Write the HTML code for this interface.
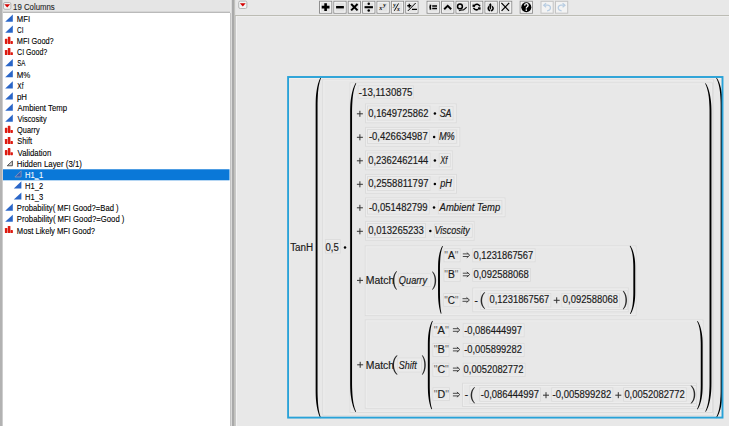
<!DOCTYPE html>
<html><head><meta charset="utf-8"><style>
html,body{margin:0;padding:0;}
body{width:729px;height:426px;position:relative;overflow:hidden;background:#e8e8e8;font-family:"Liberation Sans",sans-serif;}
.a{position:absolute;}
svg{position:absolute;left:0;top:0;font-family:"Liberation Sans",sans-serif;}
</style></head><body>
<div class="a" style="left:0;top:0;width:230px;height:12px;background:#e5e5e5"></div>
<div class="a" style="left:0;top:11px;width:230px;height:1px;background:#d6d6d6"></div>
<div class="a" style="left:0;top:12px;width:230px;height:1px;background:#bababa"></div>
<div class="a" style="left:3px;top:13px;width:227px;height:413px;background:#ffffff"></div>
<div class="a" style="left:0;top:0;width:2px;height:426px;background:#b2b2b2"></div>
<div class="a" style="left:2px;top:0;width:1px;height:426px;background:#cecece"></div>
<div class="a" style="left:230px;top:13px;width:1px;height:413px;background:#c4c4c4"></div>
<div class="a" style="left:231px;top:0;width:1px;height:426px;background:#dadada"></div>
<div class="a" style="left:232px;top:0;width:2px;height:426px;background:#a9a9a9"></div>
<div class="a" style="left:234px;top:0;width:1px;height:426px;background:#c2c2be"></div>
<div class="a" style="left:235px;top:0;width:1px;height:426px;background:#e2e2e2"></div>
<div class="a" style="left:236px;top:0;width:493px;height:15px;background:#e8e8e8"></div>
<div class="a" style="left:235px;top:15px;width:494px;height:1px;background:#bcbcb4"></div>
<div class="a" style="left:236px;top:16px;width:493px;height:1px;background:#eeeeee"></div>
<div class="a" style="left:235px;top:16px;width:1px;height:410px;background:#c8c8c8"></div>
<div class="a" style="left:236px;top:16px;width:1px;height:410px;background:#f2f2f2"></div>
<svg width="729" height="426" viewBox="0 0 729 426">
<rect x="3" y="169.28" width="226.5" height="11.02" fill="#0a78d8"/>
<path d="M5.2 21.7 L12.8 21.7 L12.8 14.5 Z" fill="#2a66c8" stroke="none" stroke-width="0"/>
<path d="M5.2 32.82 L12.8 32.82 L12.8 25.62 Z" fill="#2a66c8" stroke="none" stroke-width="0"/>
<rect x="4.9" y="38.84" width="2.5" height="5.1" rx="0.6" fill="#dd1a10"/>
<rect x="7.8" y="36.84" width="2.6" height="7.1" rx="0.6" fill="#dd1a10"/>
<rect x="10.5" y="41.04" width="2.4" height="2.9" rx="0.6" fill="#dd1a10"/>
<rect x="4.9" y="49.96" width="2.5" height="5.1" rx="0.6" fill="#dd1a10"/>
<rect x="7.8" y="47.96" width="2.6" height="7.1" rx="0.6" fill="#dd1a10"/>
<rect x="10.5" y="52.16" width="2.4" height="2.9" rx="0.6" fill="#dd1a10"/>
<path d="M5.2 66.17999999999999 L12.8 66.17999999999999 L12.8 58.97999999999999 Z" fill="#2a66c8" stroke="none" stroke-width="0"/>
<path d="M5.2 77.3 L12.8 77.3 L12.8 70.1 Z" fill="#2a66c8" stroke="none" stroke-width="0"/>
<path d="M5.2 88.42 L12.8 88.42 L12.8 81.22 Z" fill="#2a66c8" stroke="none" stroke-width="0"/>
<path d="M5.2 99.53999999999999 L12.8 99.53999999999999 L12.8 92.33999999999999 Z" fill="#2a66c8" stroke="none" stroke-width="0"/>
<path d="M5.2 110.66 L12.8 110.66 L12.8 103.46 Z" fill="#2a66c8" stroke="none" stroke-width="0"/>
<path d="M5.2 121.78 L12.8 121.78 L12.8 114.58 Z" fill="#2a66c8" stroke="none" stroke-width="0"/>
<rect x="4.9" y="127.80" width="2.5" height="5.1" rx="0.6" fill="#dd1a10"/>
<rect x="7.8" y="125.80" width="2.6" height="7.1" rx="0.6" fill="#dd1a10"/>
<rect x="10.5" y="130.00" width="2.4" height="2.9" rx="0.6" fill="#dd1a10"/>
<rect x="4.9" y="138.92" width="2.5" height="5.1" rx="0.6" fill="#dd1a10"/>
<rect x="7.8" y="136.92" width="2.6" height="7.1" rx="0.6" fill="#dd1a10"/>
<rect x="10.5" y="141.12" width="2.4" height="2.9" rx="0.6" fill="#dd1a10"/>
<rect x="4.9" y="150.04" width="2.5" height="5.1" rx="0.6" fill="#dd1a10"/>
<rect x="7.8" y="148.04" width="2.6" height="7.1" rx="0.6" fill="#dd1a10"/>
<rect x="10.5" y="152.24" width="2.4" height="2.9" rx="0.6" fill="#dd1a10"/>
<path d="M7.2 165.76 L12.4 165.76 L12.4 160.96 Z" fill="#d4d4d4" stroke="#555555" stroke-width="1.0"/>
<path d="M14.9 176.98 L21.1 176.98 L21.1 170.78 Z" fill="#2f5fb8" stroke="#8a96b8" stroke-width="0.9"/>
<path d="M13.8 188.49999999999997 L21.4 188.49999999999997 L21.4 181.29999999999998 Z" fill="#2a66c8" stroke="none" stroke-width="0"/>
<path d="M13.8 199.61999999999998 L21.4 199.61999999999998 L21.4 192.42 Z" fill="#2a66c8" stroke="none" stroke-width="0"/>
<path d="M5.2 210.73999999999998 L12.8 210.73999999999998 L12.8 203.54 Z" fill="#2a66c8" stroke="none" stroke-width="0"/>
<path d="M5.2 221.85999999999999 L12.8 221.85999999999999 L12.8 214.66 Z" fill="#2a66c8" stroke="none" stroke-width="0"/>
<rect x="4.9" y="227.88" width="2.5" height="5.1" rx="0.6" fill="#dd1a10"/>
<rect x="7.8" y="225.88" width="2.6" height="7.1" rx="0.6" fill="#dd1a10"/>
<rect x="10.5" y="230.08" width="2.4" height="2.9" rx="0.6" fill="#dd1a10"/>
<rect x="34.6" y="178.3" width="4.0" height="0.9" fill="#ffffff"/>
<rect x="3.5" y="2.5" width="7.4" height="6.800000000000001" rx="1.5" fill="#f2f4f4" stroke="#b4b4b4" stroke-width="1"/>
<path d="M4.30 4.30 L10.10 4.30 L7.20 7.50 Z" fill="#d40000"/>
<rect x="238.7" y="1.1" width="8.200000000000017" height="7.4" rx="1.5" fill="#f2f4f4" stroke="#b4b4b4" stroke-width="1"/>
<path d="M239.90 3.20 L245.70 3.20 L242.80 6.40 Z" fill="#d40000"/>
<rect x="319.5" y="1.3" width="12.2" height="11.9" fill="#e2e2e2" stroke="#8e8e8e" stroke-width="1"/>
<rect x="320.5" y="2.3" width="10.2" height="9.9" fill="none" stroke="#f6f6f6" stroke-width="1"/>
<rect x="333.88" y="1.3" width="12.2" height="11.9" fill="#e2e2e2" stroke="#8e8e8e" stroke-width="1"/>
<rect x="334.88" y="2.3" width="10.2" height="9.9" fill="none" stroke="#f6f6f6" stroke-width="1"/>
<rect x="348.26" y="1.3" width="12.2" height="11.9" fill="#e2e2e2" stroke="#8e8e8e" stroke-width="1"/>
<rect x="349.26" y="2.3" width="10.2" height="9.9" fill="none" stroke="#f6f6f6" stroke-width="1"/>
<rect x="362.64" y="1.3" width="12.2" height="11.9" fill="#e2e2e2" stroke="#8e8e8e" stroke-width="1"/>
<rect x="363.64" y="2.3" width="10.2" height="9.9" fill="none" stroke="#f6f6f6" stroke-width="1"/>
<rect x="377.02" y="1.3" width="12.2" height="11.9" fill="#e2e2e2" stroke="#8e8e8e" stroke-width="1"/>
<rect x="378.02" y="2.3" width="10.2" height="9.9" fill="none" stroke="#f6f6f6" stroke-width="1"/>
<rect x="391.4" y="1.3" width="12.2" height="11.9" fill="#e2e2e2" stroke="#8e8e8e" stroke-width="1"/>
<rect x="392.4" y="2.3" width="10.2" height="9.9" fill="none" stroke="#f6f6f6" stroke-width="1"/>
<rect x="405.78" y="1.3" width="12.2" height="11.9" fill="#e2e2e2" stroke="#8e8e8e" stroke-width="1"/>
<rect x="406.78" y="2.3" width="10.2" height="9.9" fill="none" stroke="#f6f6f6" stroke-width="1"/>
<rect x="427.1" y="1.3" width="12.2" height="11.9" fill="#e2e2e2" stroke="#8e8e8e" stroke-width="1"/>
<rect x="428.1" y="2.3" width="10.2" height="9.9" fill="none" stroke="#f6f6f6" stroke-width="1"/>
<rect x="441.58000000000004" y="1.3" width="12.2" height="11.9" fill="#e2e2e2" stroke="#8e8e8e" stroke-width="1"/>
<rect x="442.58000000000004" y="2.3" width="10.2" height="9.9" fill="none" stroke="#f6f6f6" stroke-width="1"/>
<rect x="456.06" y="1.3" width="12.2" height="11.9" fill="#e2e2e2" stroke="#8e8e8e" stroke-width="1"/>
<rect x="457.06" y="2.3" width="10.2" height="9.9" fill="none" stroke="#f6f6f6" stroke-width="1"/>
<rect x="470.54" y="1.3" width="12.2" height="11.9" fill="#e2e2e2" stroke="#8e8e8e" stroke-width="1"/>
<rect x="471.54" y="2.3" width="10.2" height="9.9" fill="none" stroke="#f6f6f6" stroke-width="1"/>
<rect x="485.02000000000004" y="1.3" width="12.2" height="11.9" fill="#e2e2e2" stroke="#8e8e8e" stroke-width="1"/>
<rect x="486.02000000000004" y="2.3" width="10.2" height="9.9" fill="none" stroke="#f6f6f6" stroke-width="1"/>
<rect x="499.5" y="1.3" width="12.2" height="11.9" fill="#e2e2e2" stroke="#8e8e8e" stroke-width="1"/>
<rect x="500.5" y="2.3" width="10.2" height="9.9" fill="none" stroke="#f6f6f6" stroke-width="1"/>
<rect x="520.2" y="1.3" width="12.2" height="11.9" fill="#e2e2e2" stroke="#8e8e8e" stroke-width="1"/>
<rect x="521.2" y="2.3" width="10.2" height="9.9" fill="none" stroke="#f6f6f6" stroke-width="1"/>
<rect x="541.0" y="1.3" width="12.2" height="11.9" fill="#f3f3f3" stroke="#c4c4c4" stroke-width="1"/>
<rect x="555.5" y="1.3" width="12.2" height="11.9" fill="#f3f3f3" stroke="#c4c4c4" stroke-width="1"/>
<path d="M321.70000000000005 7.1 H329.5 M325.6 3.3 V10.9" stroke="#000" stroke-width="2.6"/>
<path d="M336.08000000000004 7.2 H343.88" stroke="#000" stroke-width="2.4"/>
<path d="M351.16 4 L357.56 10.4 M357.56 4 L351.16 10.4" stroke="#000" stroke-width="2"/>
<path d="M364.54 7.2 H372.94" stroke="#000" stroke-width="2.1"/><circle cx="368.74" cy="3.8" r="1.25"/><circle cx="368.74" cy="10.6" r="1.25"/>
<text x="379.32" y="9.6" font-family="Liberation Serif" font-size="6" font-weight="bold" font-style="italic">x</text><text x="383.32" y="6.6" font-family="Liberation Serif" font-size="6" font-weight="bold" font-style="italic">y</text>
<text x="393.3" y="7" font-family="Liberation Serif" font-size="5.5" font-weight="bold" font-style="italic">y</text><path d="M394.3 10.8 L398.5 3.5" stroke="#000" stroke-width="0.9"/><text x="397.1" y="11.3" font-family="Liberation Serif" font-size="5.5" font-weight="bold" font-style="italic">x</text>
<path d="M407.28 5.75 H411.28 M409.28 3.8 V7.7 M411.98 9.3 H416.98" stroke="#000" stroke-width="1.3"/><path d="M407.88 10.9 L415.68 3.0" stroke="#000" stroke-width="1.0"/>
<path d="M430.6 4.8 Q429.6 7.2 430.6 9.6" stroke="#000" stroke-width="1.6" fill="none"/><path d="M432.20000000000005 5.9 H437.00000000000006 M432.20000000000005 8.6 H437.00000000000006" stroke="#000" stroke-width="1.5"/>
<path d="M444.18000000000006 9.3 L447.68000000000006 5.9 L451.18000000000006 9.3" stroke="#000" stroke-width="1.9" fill="none"/>
<circle cx="459.96000000000004" cy="6.4" r="2.4" stroke="#000" stroke-width="1.5" fill="none"/><path d="M459.16 10.9 C460.76000000000005 9.4 462.76000000000005 10.6 463.96000000000004 9.6 S465.76000000000005 8.2 466.56 7.0" stroke="#000" stroke-width="1.1" fill="none"/>
<path d="M474.84000000000003 5.2 Q477.24000000000007 3.0 480.04 6.2 M478.04 9.4 Q475.44000000000005 10.9 473.44000000000005 7.8" stroke="#000" stroke-width="1.5" fill="none"/><rect x="472.54" y="4.6" width="2.5" height="2.3"/><rect x="478.04" y="7.3" width="2.5" height="2.3"/>
<path d="M489.32000000000005 6.3 Q486.7200000000001 8.8 490.02000000000004 11.0 M491.9200000000001 6.3 Q494.7200000000001 8.8 491.2200000000001 11.0" stroke="#000" stroke-width="1.5" fill="none"/><path d="M488.7200000000001 5.6 L490.32000000000005 3.0 L491.9200000000001 5.6 Z"/><path d="M490.32000000000005 5 V9.2" stroke="#000" stroke-width="1.3"/>
<path d="M501.40000000000003 2.8 L509.0 10.9 M509.20000000000005 2.8 L501.6 10.9" stroke="#000" stroke-width="1.2"/>
<circle cx="526.3000000000001" cy="7.2" r="5.0" fill="#000"/><path d="M524.6 5.6 Q524.7 3.6 526.3000000000001 3.6 Q528.1 3.6 528.1 5.3 Q528.1 6.4 527.0000000000001 7.0 Q526.3000000000001 7.4 526.3000000000001 8.4" stroke="#fff" stroke-width="1.4" fill="none"/><circle cx="526.3000000000001" cy="10.1" r="0.85" fill="#fff"/>
<path d="M544.1 5.2 H547.9 Q550.7 5.6 550.5 8.2 Q550.1 10.6 547.1 10.8" stroke="#b8cde2" stroke-width="1.2" fill="none"/><path d="M546.1 3.2 L543.7 5.2 L546.1 7.2" stroke="#b8cde2" stroke-width="1.2" fill="none"/>
<path d="M564.6 5.2 H560.8000000000001 Q558.0 5.6 558.2 8.2 Q558.6 10.6 561.6 10.8" stroke="#b8cde2" stroke-width="1.2" fill="none"/><path d="M562.6 3.2 L565.0 5.2 L562.6 7.2" stroke="#b8cde2" stroke-width="1.2" fill="none"/>
<rect x="289.6" y="78.5" width="431.4" height="337.6" fill="none" stroke="#f3efec" stroke-width="1"/>
<rect x="322.80" y="79.20" width="390.50" height="336.00" fill="#e8e8e8" stroke="#dcdcdc" stroke-width="1"/>
<rect x="323.80" y="80.20" width="388.50" height="334.00" fill="none" stroke="#ededed" stroke-width="1"/>
<rect x="325.40" y="239.60" width="14.80" height="13.40" fill="#e8e8e8" stroke="#dcdcdc" stroke-width="1"/>
<rect x="326.40" y="240.60" width="12.80" height="11.40" fill="none" stroke="#ededed" stroke-width="1"/>
<rect x="350.10" y="82.90" width="362.30" height="329.50" fill="#e8e8e8" stroke="#dcdcdc" stroke-width="1"/>
<rect x="351.10" y="83.90" width="360.30" height="327.50" fill="none" stroke="#ededed" stroke-width="1"/>
<rect x="358.20" y="85.90" width="55.10" height="12.10" fill="#e8e8e8" stroke="#dcdcdc" stroke-width="1"/>
<rect x="359.20" y="86.90" width="53.10" height="10.10" fill="none" stroke="#ededed" stroke-width="1"/>
<rect x="365.50" y="103.90" width="90.70" height="18.80" fill="#e8e8e8" stroke="#dcdcdc" stroke-width="1"/>
<rect x="366.50" y="104.90" width="88.70" height="16.80" fill="none" stroke="#ededed" stroke-width="1"/>
<rect x="367.50" y="106.10" width="62.50" height="13.80" fill="#e8e8e8" stroke="#dcdcdc" stroke-width="1"/>
<rect x="368.50" y="107.10" width="60.50" height="11.80" fill="none" stroke="#ededed" stroke-width="1"/>
<rect x="439.30" y="106.60" width="13.60" height="13.10" fill="#e8e8e8" stroke="#dcdcdc" stroke-width="1"/>
<rect x="440.30" y="107.60" width="11.60" height="11.10" fill="none" stroke="#ededed" stroke-width="1"/>
<rect x="365.50" y="127.40" width="94.20" height="18.80" fill="#e8e8e8" stroke="#dcdcdc" stroke-width="1"/>
<rect x="366.50" y="128.40" width="92.20" height="16.80" fill="none" stroke="#ededed" stroke-width="1"/>
<rect x="367.50" y="129.60" width="61.70" height="13.80" fill="#e8e8e8" stroke="#dcdcdc" stroke-width="1"/>
<rect x="368.50" y="130.60" width="59.70" height="11.80" fill="none" stroke="#ededed" stroke-width="1"/>
<rect x="438.50" y="130.10" width="17.80" height="13.10" fill="#e8e8e8" stroke="#dcdcdc" stroke-width="1"/>
<rect x="439.50" y="131.10" width="15.80" height="11.10" fill="none" stroke="#ededed" stroke-width="1"/>
<rect x="365.50" y="150.90" width="86.80" height="18.80" fill="#e8e8e8" stroke="#dcdcdc" stroke-width="1"/>
<rect x="366.50" y="151.90" width="84.80" height="16.80" fill="none" stroke="#ededed" stroke-width="1"/>
<rect x="367.50" y="153.10" width="62.50" height="13.80" fill="#e8e8e8" stroke="#dcdcdc" stroke-width="1"/>
<rect x="368.50" y="154.10" width="60.50" height="11.80" fill="none" stroke="#ededed" stroke-width="1"/>
<rect x="439.30" y="153.60" width="10.90" height="13.10" fill="#e8e8e8" stroke="#dcdcdc" stroke-width="1"/>
<rect x="440.30" y="154.60" width="8.90" height="11.10" fill="none" stroke="#ededed" stroke-width="1"/>
<rect x="365.50" y="174.40" width="91.00" height="18.80" fill="#e8e8e8" stroke="#dcdcdc" stroke-width="1"/>
<rect x="366.50" y="175.40" width="89.00" height="16.80" fill="none" stroke="#ededed" stroke-width="1"/>
<rect x="367.50" y="176.60" width="62.50" height="13.80" fill="#e8e8e8" stroke="#dcdcdc" stroke-width="1"/>
<rect x="368.50" y="177.60" width="60.50" height="11.80" fill="none" stroke="#ededed" stroke-width="1"/>
<rect x="439.30" y="177.10" width="14.50" height="13.10" fill="#e8e8e8" stroke="#dcdcdc" stroke-width="1"/>
<rect x="440.30" y="178.10" width="12.50" height="11.10" fill="none" stroke="#ededed" stroke-width="1"/>
<rect x="365.50" y="197.90" width="139.50" height="18.80" fill="#e8e8e8" stroke="#dcdcdc" stroke-width="1"/>
<rect x="366.50" y="198.90" width="137.50" height="16.80" fill="none" stroke="#ededed" stroke-width="1"/>
<rect x="367.50" y="200.10" width="61.60" height="13.80" fill="#e8e8e8" stroke="#dcdcdc" stroke-width="1"/>
<rect x="368.50" y="201.10" width="59.60" height="11.80" fill="none" stroke="#ededed" stroke-width="1"/>
<rect x="438.40" y="200.60" width="63.40" height="13.10" fill="#e8e8e8" stroke="#dcdcdc" stroke-width="1"/>
<rect x="439.40" y="201.60" width="61.40" height="11.10" fill="none" stroke="#ededed" stroke-width="1"/>
<rect x="365.50" y="221.40" width="108.60" height="18.80" fill="#e8e8e8" stroke="#dcdcdc" stroke-width="1"/>
<rect x="366.50" y="222.40" width="106.60" height="16.80" fill="none" stroke="#ededed" stroke-width="1"/>
<rect x="367.50" y="223.60" width="57.90" height="13.80" fill="#e8e8e8" stroke="#dcdcdc" stroke-width="1"/>
<rect x="368.50" y="224.60" width="55.90" height="11.80" fill="none" stroke="#ededed" stroke-width="1"/>
<rect x="434.70" y="224.10" width="37.50" height="13.10" fill="#e8e8e8" stroke="#dcdcdc" stroke-width="1"/>
<rect x="435.70" y="225.10" width="35.50" height="11.10" fill="none" stroke="#ededed" stroke-width="1"/>
<rect x="365.20" y="245.90" width="270.80" height="69.70" fill="#e8e8e8" stroke="#dcdcdc" stroke-width="1"/>
<rect x="366.20" y="246.90" width="268.80" height="67.70" fill="none" stroke="#ededed" stroke-width="1"/>
<rect x="398.40" y="273.90" width="32.30" height="12.70" fill="#e8e8e8" stroke="#dcdcdc" stroke-width="1"/>
<rect x="399.40" y="274.90" width="30.30" height="10.70" fill="none" stroke="#ededed" stroke-width="1"/>
<rect x="444.10" y="248.80" width="16.00" height="13.00" fill="#e8e8e8" stroke="#dcdcdc" stroke-width="1"/>
<rect x="445.10" y="249.80" width="14.00" height="11.00" fill="none" stroke="#ededed" stroke-width="1"/>
<rect x="472.80" y="248.80" width="62.30" height="13.00" fill="#e8e8e8" stroke="#dcdcdc" stroke-width="1"/>
<rect x="473.80" y="249.80" width="60.30" height="11.00" fill="none" stroke="#ededed" stroke-width="1"/>
<rect x="444.10" y="268.60" width="16.00" height="12.70" fill="#e8e8e8" stroke="#dcdcdc" stroke-width="1"/>
<rect x="445.10" y="269.60" width="14.00" height="10.70" fill="none" stroke="#ededed" stroke-width="1"/>
<rect x="472.80" y="268.60" width="57.70" height="12.70" fill="#e8e8e8" stroke="#dcdcdc" stroke-width="1"/>
<rect x="473.80" y="269.60" width="55.70" height="10.70" fill="none" stroke="#ededed" stroke-width="1"/>
<rect x="443.70" y="293.50" width="16.20" height="12.70" fill="#e8e8e8" stroke="#dcdcdc" stroke-width="1"/>
<rect x="444.70" y="294.50" width="14.20" height="10.70" fill="none" stroke="#ededed" stroke-width="1"/>
<rect x="472.80" y="288.00" width="155.50" height="23.70" fill="#e8e8e8" stroke="#dcdcdc" stroke-width="1"/>
<rect x="473.80" y="289.00" width="153.50" height="21.70" fill="none" stroke="#ededed" stroke-width="1"/>
<rect x="480.80" y="290.80" width="146.50" height="18.70" fill="#e8e8e8" stroke="#dcdcdc" stroke-width="1"/>
<rect x="481.80" y="291.80" width="144.50" height="16.70" fill="none" stroke="#ededed" stroke-width="1"/>
<rect x="488.30" y="293.50" width="62.50" height="13.40" fill="#e8e8e8" stroke="#dcdcdc" stroke-width="1"/>
<rect x="489.30" y="294.50" width="60.50" height="11.40" fill="none" stroke="#ededed" stroke-width="1"/>
<rect x="562.00" y="293.70" width="57.40" height="13.40" fill="#e8e8e8" stroke="#dcdcdc" stroke-width="1"/>
<rect x="563.00" y="294.70" width="55.40" height="11.40" fill="none" stroke="#ededed" stroke-width="1"/>
<rect x="365.30" y="319.90" width="337.70" height="88.40" fill="#e8e8e8" stroke="#dcdcdc" stroke-width="1"/>
<rect x="366.30" y="320.90" width="335.70" height="86.40" fill="none" stroke="#ededed" stroke-width="1"/>
<rect x="397.80" y="358.10" width="23.70" height="13.80" fill="#e8e8e8" stroke="#dcdcdc" stroke-width="1"/>
<rect x="398.80" y="359.10" width="21.70" height="11.80" fill="none" stroke="#ededed" stroke-width="1"/>
<rect x="433.00" y="323.80" width="15.90" height="13.00" fill="#e8e8e8" stroke="#dcdcdc" stroke-width="1"/>
<rect x="434.00" y="324.80" width="13.90" height="11.00" fill="none" stroke="#ededed" stroke-width="1"/>
<rect x="433.00" y="343.40" width="15.90" height="13.00" fill="#e8e8e8" stroke="#dcdcdc" stroke-width="1"/>
<rect x="434.00" y="344.40" width="13.90" height="11.00" fill="none" stroke="#ededed" stroke-width="1"/>
<rect x="433.00" y="363.30" width="15.90" height="13.00" fill="#e8e8e8" stroke="#dcdcdc" stroke-width="1"/>
<rect x="434.00" y="364.30" width="13.90" height="11.00" fill="none" stroke="#ededed" stroke-width="1"/>
<rect x="463.20" y="323.80" width="60.80" height="13.00" fill="#e8e8e8" stroke="#dcdcdc" stroke-width="1"/>
<rect x="464.20" y="324.80" width="58.80" height="11.00" fill="none" stroke="#ededed" stroke-width="1"/>
<rect x="463.20" y="343.40" width="60.80" height="13.20" fill="#e8e8e8" stroke="#dcdcdc" stroke-width="1"/>
<rect x="464.20" y="344.40" width="58.80" height="11.20" fill="none" stroke="#ededed" stroke-width="1"/>
<rect x="463.20" y="363.30" width="61.80" height="13.00" fill="#e8e8e8" stroke="#dcdcdc" stroke-width="1"/>
<rect x="464.20" y="364.30" width="59.80" height="11.00" fill="none" stroke="#ededed" stroke-width="1"/>
<rect x="433.00" y="387.80" width="16.40" height="12.60" fill="#e8e8e8" stroke="#dcdcdc" stroke-width="1"/>
<rect x="434.00" y="388.80" width="14.40" height="10.60" fill="none" stroke="#ededed" stroke-width="1"/>
<rect x="462.50" y="383.30" width="234.00" height="23.20" fill="#e8e8e8" stroke="#dcdcdc" stroke-width="1"/>
<rect x="463.50" y="384.30" width="232.00" height="21.20" fill="none" stroke="#ededed" stroke-width="1"/>
<rect x="470.00" y="385.50" width="226.00" height="18.00" fill="#e8e8e8" stroke="#dcdcdc" stroke-width="1"/>
<rect x="471.00" y="386.50" width="224.00" height="16.00" fill="none" stroke="#ededed" stroke-width="1"/>
<rect x="479.80" y="387.80" width="60.60" height="13.40" fill="#e8e8e8" stroke="#dcdcdc" stroke-width="1"/>
<rect x="480.80" y="388.80" width="58.60" height="11.40" fill="none" stroke="#ededed" stroke-width="1"/>
<rect x="551.80" y="387.80" width="61.00" height="13.40" fill="#e8e8e8" stroke="#dcdcdc" stroke-width="1"/>
<rect x="552.80" y="388.80" width="59.00" height="11.40" fill="none" stroke="#ededed" stroke-width="1"/>
<rect x="623.60" y="387.80" width="62.60" height="13.40" fill="#e8e8e8" stroke="#dcdcdc" stroke-width="1"/>
<rect x="624.60" y="388.80" width="60.60" height="11.40" fill="none" stroke="#ededed" stroke-width="1"/>
<path d="M320.69 77.24 L320.30 77.96 L319.92 78.71 L319.55 79.51 L319.20 80.35 L318.87 81.23 L318.55 82.15 L318.25 83.10 L317.96 84.10 L317.69 85.14 L317.43 86.21 L317.19 87.33 L316.97 88.49 L316.76 89.68 L316.56 90.91 L316.39 92.19 L316.22 93.50 L316.07 94.85 L315.94 96.24 L315.84 97.67 L315.77 99.14 L315.72 100.65 L315.68 102.19 L315.66 103.78 L315.65 105.40 L315.65 390.00 L315.66 391.62 L315.68 393.21 L315.71 394.75 L315.76 396.26 L315.83 397.73 L315.92 399.16 L316.05 400.55 L316.19 401.90 L316.34 403.21 L316.51 404.48 L316.70 405.71 L316.89 406.91 L317.10 408.06 L317.33 409.18 L317.57 410.25 L317.83 411.29 L318.10 412.29 L318.38 413.24 L318.68 414.16 L318.99 415.04 L319.32 415.88 L319.66 416.68 L320.02 417.44 L320.38 418.15 L321.02 417.85 L320.72 417.13 L320.43 416.37 L320.16 415.57 L319.90 414.74 L319.66 413.87 L319.43 412.96 L319.22 412.01 L319.02 411.02 L318.83 410.00 L318.66 408.93 L318.50 407.83 L318.36 406.69 L318.23 405.51 L318.11 404.30 L318.01 403.04 L317.92 401.75 L317.85 400.41 L317.79 399.04 L317.73 397.63 L317.66 396.19 L317.61 394.70 L317.58 393.17 L317.56 391.61 L317.55 390.00 L317.55 105.40 L317.56 103.80 L317.58 102.23 L317.62 100.70 L317.67 99.22 L317.74 97.77 L317.81 96.36 L317.87 94.99 L317.96 93.66 L318.05 92.36 L318.16 91.11 L318.29 89.89 L318.43 88.71 L318.59 87.58 L318.76 86.47 L318.95 85.41 L319.15 84.39 L319.37 83.40 L319.60 82.45 L319.85 81.54 L320.11 80.67 L320.39 79.84 L320.68 79.04 L320.99 78.28 L321.31 77.56 Z" fill="#000"/>
<path d="M716.00 77.78 L716.40 78.51 L716.78 79.27 L717.14 80.07 L717.48 80.90 L717.80 81.77 L718.11 82.68 L718.39 83.63 L718.66 84.61 L718.91 85.64 L719.14 86.70 L719.35 87.80 L719.55 88.94 L719.72 90.11 L719.88 91.33 L720.02 92.58 L720.15 93.87 L720.25 95.20 L720.34 96.57 L720.42 97.98 L720.50 99.43 L720.57 100.91 L720.61 102.43 L720.64 104.00 L720.65 105.60 L720.65 390.00 L720.64 391.60 L720.61 393.17 L720.56 394.69 L720.50 396.17 L720.41 397.62 L720.32 399.02 L720.23 400.39 L720.12 401.72 L720.00 403.01 L719.85 404.27 L719.68 405.48 L719.50 406.66 L719.30 407.80 L719.07 408.89 L718.83 409.96 L718.57 410.98 L718.29 411.96 L717.99 412.91 L717.68 413.82 L717.34 414.69 L716.99 415.53 L716.61 416.32 L716.22 417.09 L715.80 417.81 L716.40 418.19 L716.88 417.48 L717.34 416.72 L717.79 415.92 L718.22 415.08 L718.63 414.21 L719.02 413.29 L719.39 412.33 L719.74 411.33 L720.07 410.29 L720.38 409.22 L720.68 408.10 L720.95 406.94 L721.21 405.75 L721.44 404.51 L721.66 403.24 L721.85 401.92 L722.03 400.57 L722.19 399.18 L722.31 397.74 L722.40 396.27 L722.46 394.76 L722.51 393.21 L722.54 391.63 L722.55 390.00 L722.55 105.60 L722.54 103.98 L722.51 102.39 L722.47 100.84 L722.40 99.33 L722.32 97.86 L722.20 96.43 L722.05 95.03 L721.88 93.68 L721.69 92.37 L721.48 91.09 L721.25 89.86 L721.00 88.66 L720.74 87.51 L720.45 86.39 L720.15 85.31 L719.83 84.27 L719.49 83.28 L719.13 82.32 L718.76 81.40 L718.36 80.52 L717.95 79.68 L717.51 78.89 L717.06 78.13 L716.60 77.42 Z" fill="#000"/>
<path d="M355.69 83.03 L355.26 83.77 L354.84 84.56 L354.44 85.38 L354.05 86.25 L353.69 87.16 L353.34 88.11 L353.00 89.10 L352.69 90.14 L352.39 91.21 L352.11 92.32 L351.84 93.48 L351.60 94.68 L351.37 95.91 L351.15 97.19 L350.96 98.51 L350.78 99.87 L350.62 101.27 L350.47 102.71 L350.36 104.19 L350.29 105.71 L350.23 107.28 L350.18 108.88 L350.16 110.52 L350.15 112.20 L350.15 382.80 L350.16 384.48 L350.18 386.12 L350.22 387.72 L350.28 389.28 L350.36 390.81 L350.46 392.29 L350.60 393.73 L350.76 395.13 L350.93 396.49 L351.12 397.80 L351.32 399.08 L351.54 400.32 L351.78 401.51 L352.04 402.67 L352.31 403.78 L352.60 404.86 L352.90 405.89 L353.22 406.88 L353.56 407.83 L353.91 408.74 L354.28 409.61 L354.67 410.44 L355.07 411.22 L355.49 411.96 L356.11 411.64 L355.76 410.89 L355.43 410.10 L355.11 409.28 L354.81 408.41 L354.53 407.51 L354.27 406.57 L354.01 405.58 L353.78 404.56 L353.56 403.50 L353.36 402.40 L353.18 401.26 L353.01 400.08 L352.85 398.86 L352.71 397.60 L352.59 396.30 L352.49 394.96 L352.40 393.58 L352.33 392.16 L352.25 390.70 L352.18 389.20 L352.12 387.66 L352.08 386.08 L352.06 384.46 L352.05 382.80 L352.05 112.20 L352.06 110.54 L352.08 108.92 L352.13 107.34 L352.19 105.80 L352.26 104.30 L352.34 102.84 L352.42 101.42 L352.51 100.04 L352.62 98.70 L352.75 97.40 L352.89 96.14 L353.05 94.92 L353.23 93.74 L353.43 92.60 L353.64 91.50 L353.87 90.44 L354.11 89.42 L354.38 88.44 L354.65 87.50 L354.95 86.59 L355.26 85.73 L355.59 84.91 L355.94 84.12 L356.31 83.37 Z" fill="#000"/>
<path d="M705.09 83.57 L705.48 84.32 L705.84 85.11 L706.19 85.94 L706.51 86.80 L706.82 87.70 L707.11 88.65 L707.39 89.63 L707.64 90.65 L707.88 91.71 L708.11 92.81 L708.31 93.95 L708.50 95.13 L708.67 96.35 L708.82 97.61 L708.95 98.91 L709.07 100.25 L709.17 101.62 L709.25 103.04 L709.33 104.50 L709.41 106.00 L709.47 107.54 L709.51 109.12 L709.54 110.74 L709.55 112.40 L709.55 382.60 L709.54 384.26 L709.52 385.88 L709.47 387.46 L709.41 389.00 L709.33 390.50 L709.25 391.96 L709.18 393.38 L709.08 394.76 L708.97 396.10 L708.83 397.40 L708.69 398.65 L708.52 399.87 L708.34 401.05 L708.14 402.19 L707.92 403.29 L707.69 404.35 L707.44 405.38 L707.17 406.36 L706.88 407.30 L706.58 408.20 L706.26 409.07 L705.92 409.89 L705.57 410.68 L705.19 411.43 L705.81 411.77 L706.25 411.03 L706.67 410.25 L707.08 409.42 L707.47 408.55 L707.85 407.64 L708.21 406.69 L708.55 405.70 L708.87 404.67 L709.17 403.59 L709.46 402.48 L709.73 401.32 L709.98 400.13 L710.21 398.89 L710.43 397.61 L710.63 396.29 L710.81 394.93 L710.97 393.53 L711.12 392.09 L711.23 390.61 L711.31 389.09 L711.37 387.53 L711.42 385.92 L711.44 384.28 L711.45 382.60 L711.45 112.40 L711.44 110.72 L711.41 109.08 L711.37 107.47 L711.31 105.91 L711.23 104.39 L711.11 102.91 L710.97 101.47 L710.80 100.07 L710.61 98.71 L710.41 97.39 L710.19 96.11 L709.95 94.87 L709.70 93.67 L709.42 92.52 L709.13 91.40 L708.82 90.33 L708.49 89.30 L708.15 88.30 L707.79 87.35 L707.40 86.44 L707.00 85.58 L706.59 84.75 L706.15 83.97 L705.71 83.23 Z" fill="#000"/>
<path d="M442.29 246.04 L441.96 246.60 L441.65 247.19 L441.34 247.82 L441.05 248.48 L440.77 249.17 L440.50 249.89 L440.25 250.64 L440.01 251.43 L439.78 252.25 L439.56 253.09 L439.36 253.97 L439.17 254.88 L438.99 255.82 L438.83 256.79 L438.67 257.79 L438.53 258.83 L438.41 259.89 L438.29 260.99 L438.21 262.11 L438.15 263.27 L438.11 264.46 L438.08 265.68 L438.06 266.92 L438.05 268.20 L438.05 291.60 L438.05 292.87 L438.07 294.12 L438.08 295.33 L438.11 296.51 L438.15 297.67 L438.20 298.79 L438.29 299.88 L438.38 300.94 L438.47 301.97 L438.58 302.97 L438.69 303.94 L438.81 304.87 L438.94 305.78 L439.08 306.66 L439.22 307.50 L439.37 308.31 L439.53 309.10 L439.70 309.85 L439.88 310.57 L440.06 311.26 L440.25 311.92 L440.45 312.55 L440.65 313.15 L440.87 313.71 L441.53 313.49 L441.39 312.92 L441.25 312.33 L441.12 311.70 L441.00 311.05 L440.88 310.36 L440.77 309.65 L440.67 308.90 L440.58 308.13 L440.50 307.32 L440.42 306.49 L440.35 305.62 L440.29 304.73 L440.23 303.80 L440.18 302.84 L440.14 301.86 L440.11 300.84 L440.09 299.79 L440.07 298.71 L440.04 297.60 L440.01 296.46 L439.98 295.29 L439.97 294.09 L439.95 292.86 L439.95 291.60 L439.95 268.20 L439.96 266.94 L439.97 265.71 L440.01 264.52 L440.05 263.35 L440.10 262.22 L440.16 261.11 L440.21 260.04 L440.27 258.99 L440.34 257.98 L440.42 257.00 L440.52 256.04 L440.63 255.12 L440.75 254.23 L440.89 253.36 L441.03 252.53 L441.19 251.73 L441.36 250.95 L441.55 250.21 L441.74 249.50 L441.95 248.81 L442.17 248.16 L442.40 247.53 L442.65 246.94 L442.91 246.36 Z" fill="#000"/>
<path d="M629.70 246.08 L630.02 246.66 L630.32 247.26 L630.61 247.88 L630.88 248.54 L631.13 249.22 L631.37 249.94 L631.59 250.68 L631.80 251.45 L632.00 252.26 L632.18 253.09 L632.35 253.95 L632.50 254.84 L632.64 255.76 L632.76 256.72 L632.87 257.70 L632.96 258.71 L633.04 259.75 L633.10 260.83 L633.17 261.93 L633.23 263.06 L633.28 264.22 L633.32 265.42 L633.34 266.64 L633.35 267.90 L633.35 291.90 L633.34 293.16 L633.32 294.38 L633.29 295.58 L633.24 296.74 L633.17 297.88 L633.11 298.98 L633.05 300.05 L632.98 301.09 L632.89 302.11 L632.79 303.09 L632.68 304.04 L632.55 304.96 L632.40 305.86 L632.25 306.72 L632.08 307.55 L631.89 308.35 L631.69 309.13 L631.48 309.87 L631.25 310.58 L631.01 311.27 L630.76 311.92 L630.49 312.55 L630.20 313.15 L629.90 313.72 L630.50 314.08 L630.87 313.52 L631.22 312.93 L631.57 312.30 L631.89 311.64 L632.21 310.95 L632.51 310.23 L632.79 309.48 L633.06 308.69 L633.32 307.87 L633.56 307.03 L633.79 306.15 L634.00 305.24 L634.20 304.29 L634.38 303.32 L634.55 302.32 L634.71 301.28 L634.85 300.22 L634.98 299.12 L635.07 297.99 L635.13 296.84 L635.19 295.65 L635.22 294.43 L635.24 293.18 L635.25 291.90 L635.25 267.90 L635.24 266.62 L635.22 265.37 L635.18 264.15 L635.13 262.96 L635.06 261.80 L634.96 260.67 L634.83 259.58 L634.69 258.51 L634.53 257.48 L634.35 256.47 L634.16 255.50 L633.95 254.56 L633.73 253.65 L633.49 252.77 L633.24 251.92 L632.97 251.10 L632.69 250.32 L632.39 249.56 L632.08 248.84 L631.75 248.15 L631.41 247.49 L631.05 246.86 L630.68 246.27 L630.30 245.72 Z" fill="#000"/>
<path d="M432.19 320.85 L431.85 321.45 L431.53 322.10 L431.22 322.79 L430.92 323.51 L430.63 324.26 L430.36 325.05 L430.10 325.87 L429.85 326.73 L429.62 327.62 L429.40 328.54 L429.19 329.50 L428.99 330.49 L428.81 331.51 L428.64 332.57 L428.49 333.66 L428.34 334.79 L428.21 335.95 L428.10 337.14 L428.01 338.37 L427.95 339.63 L427.91 340.92 L427.88 342.25 L427.86 343.61 L427.85 345.00 L427.85 385.20 L427.86 386.59 L427.87 387.95 L427.90 389.27 L427.93 390.56 L427.98 391.82 L428.05 393.05 L428.15 394.24 L428.27 395.40 L428.39 396.52 L428.52 397.61 L428.66 398.67 L428.82 399.69 L428.98 400.68 L429.15 401.64 L429.34 402.56 L429.53 403.45 L429.74 404.30 L429.96 405.12 L430.18 405.91 L430.42 406.66 L430.67 407.38 L430.93 408.07 L431.20 408.72 L431.47 409.33 L432.13 409.07 L431.91 408.45 L431.71 407.80 L431.52 407.12 L431.35 406.40 L431.18 405.66 L431.02 404.88 L430.87 404.06 L430.73 403.22 L430.60 402.34 L430.49 401.43 L430.38 400.49 L430.28 399.51 L430.20 398.50 L430.12 397.46 L430.06 396.38 L430.00 395.27 L429.96 394.13 L429.92 392.95 L429.88 391.74 L429.83 390.50 L429.80 389.23 L429.77 387.92 L429.76 386.58 L429.75 385.20 L429.75 345.00 L429.76 343.63 L429.78 342.28 L429.81 340.98 L429.85 339.71 L429.91 338.47 L429.96 337.26 L430.01 336.09 L430.08 334.95 L430.15 333.84 L430.24 332.76 L430.34 331.72 L430.46 330.71 L430.58 329.74 L430.72 328.79 L430.87 327.88 L431.04 327.01 L431.22 326.16 L431.40 325.35 L431.61 324.57 L431.82 323.83 L432.05 323.11 L432.29 322.43 L432.54 321.78 L432.81 321.15 Z" fill="#000"/>
<path d="M697.10 321.37 L697.41 322.00 L697.71 322.65 L698.00 323.33 L698.27 324.05 L698.52 324.79 L698.76 325.57 L698.99 326.38 L699.20 327.23 L699.40 328.11 L699.58 329.01 L699.74 329.96 L699.90 330.93 L700.03 331.94 L700.16 332.98 L700.26 334.05 L700.36 335.16 L700.44 336.30 L700.50 337.47 L700.57 338.67 L700.63 339.91 L700.68 341.18 L700.72 342.49 L700.74 343.83 L700.75 345.20 L700.75 385.20 L700.74 386.57 L700.72 387.91 L700.68 389.22 L700.63 390.49 L700.56 391.72 L700.49 392.93 L700.43 394.10 L700.35 395.24 L700.25 396.35 L700.14 397.42 L700.01 398.46 L699.87 399.47 L699.72 400.44 L699.54 401.38 L699.36 402.29 L699.16 403.17 L698.94 404.01 L698.71 404.82 L698.46 405.60 L698.20 406.35 L697.92 407.06 L697.63 407.75 L697.32 408.40 L697.00 409.02 L697.60 409.38 L697.99 408.77 L698.37 408.12 L698.74 407.44 L699.09 406.72 L699.42 405.96 L699.74 405.18 L700.04 404.36 L700.33 403.50 L700.60 402.61 L700.86 401.68 L701.10 400.73 L701.33 399.73 L701.54 398.71 L701.73 397.65 L701.91 396.55 L702.08 395.43 L702.22 394.27 L702.36 393.07 L702.46 391.84 L702.53 390.58 L702.58 389.28 L702.62 387.96 L702.64 386.59 L702.65 385.20 L702.65 345.20 L702.64 343.81 L702.62 342.45 L702.58 341.12 L702.53 339.82 L702.46 338.56 L702.36 337.33 L702.23 336.14 L702.09 334.98 L701.93 333.85 L701.75 332.76 L701.56 331.70 L701.35 330.67 L701.13 329.68 L700.90 328.72 L700.64 327.79 L700.38 326.90 L700.09 326.05 L699.80 325.23 L699.49 324.44 L699.16 323.69 L698.82 322.97 L698.46 322.28 L698.09 321.63 L697.70 321.03 Z" fill="#000"/>
<path d="M396.59 271.09 L396.10 271.46 L395.65 271.91 L395.24 272.41 L394.86 272.95 L394.52 273.52 L394.21 274.13 L393.93 274.76 L393.68 275.42 L393.47 276.10 L393.29 276.80 L393.14 277.51 L393.02 278.24 L392.94 278.97 L392.89 279.71 L392.88 280.45 L392.89 281.19 L392.94 281.93 L393.02 282.66 L393.14 283.39 L393.29 284.10 L393.47 284.80 L393.68 285.48 L393.93 286.14 L394.21 286.77 L394.52 287.38 L394.86 287.95 L395.24 288.49 L395.65 288.99 L396.10 289.44 L396.59 289.81 L397.01 289.39 L396.68 288.92 L396.35 288.45 L396.05 287.95 L395.78 287.43 L395.53 286.88 L395.30 286.31 L395.09 285.71 L394.91 285.10 L394.76 284.47 L394.63 283.82 L394.52 283.16 L394.43 282.49 L394.37 281.82 L394.34 281.13 L394.33 280.45 L394.34 279.77 L394.37 279.08 L394.43 278.41 L394.52 277.74 L394.63 277.08 L394.76 276.43 L394.91 275.80 L395.09 275.19 L395.30 274.59 L395.53 274.02 L395.78 273.47 L396.05 272.95 L396.35 272.45 L396.68 271.98 L397.01 271.51 Z" fill="#2a2a2a"/>
<path d="M431.99 271.81 L432.33 272.28 L432.65 272.74 L432.95 273.23 L433.22 273.75 L433.48 274.29 L433.70 274.85 L433.91 275.43 L434.09 276.03 L434.24 276.65 L434.38 277.29 L434.48 277.94 L434.57 278.59 L434.63 279.26 L434.66 279.93 L434.67 280.60 L434.66 281.27 L434.63 281.94 L434.57 282.61 L434.48 283.26 L434.38 283.91 L434.24 284.55 L434.09 285.17 L433.91 285.77 L433.70 286.35 L433.48 286.91 L433.22 287.45 L432.95 287.97 L432.65 288.46 L432.33 288.92 L431.99 289.39 L432.41 289.81 L432.90 289.45 L433.34 289.00 L433.76 288.51 L434.13 287.98 L434.48 287.42 L434.79 286.82 L435.07 286.20 L435.32 285.55 L435.53 284.88 L435.71 284.20 L435.86 283.49 L435.98 282.78 L436.06 282.06 L436.11 281.33 L436.12 280.60 L436.11 279.87 L436.06 279.14 L435.98 278.42 L435.86 277.71 L435.71 277.00 L435.53 276.32 L435.32 275.65 L435.07 275.00 L434.79 274.38 L434.48 273.78 L434.13 273.22 L433.76 272.69 L433.34 272.20 L432.90 271.75 L432.41 271.39 Z" fill="#2a2a2a"/>
<path d="M484.81 292.07 L484.28 292.39 L483.79 292.79 L483.33 293.24 L482.91 293.72 L482.52 294.24 L482.17 294.78 L481.86 295.36 L481.58 295.96 L481.34 296.58 L481.14 297.21 L480.97 297.86 L480.84 298.52 L480.75 299.19 L480.69 299.87 L480.67 300.55 L480.69 301.23 L480.75 301.91 L480.84 302.58 L480.97 303.24 L481.14 303.89 L481.34 304.52 L481.58 305.14 L481.86 305.74 L482.17 306.32 L482.52 306.86 L482.91 307.38 L483.33 307.86 L483.79 308.31 L484.28 308.71 L484.81 309.03 L485.19 308.57 L484.79 308.13 L484.42 307.70 L484.08 307.24 L483.76 306.77 L483.48 306.27 L483.22 305.76 L482.99 305.23 L482.79 304.68 L482.61 304.12 L482.46 303.54 L482.34 302.96 L482.25 302.36 L482.18 301.76 L482.14 301.16 L482.12 300.55 L482.14 299.94 L482.18 299.34 L482.25 298.74 L482.34 298.14 L482.46 297.56 L482.61 296.98 L482.79 296.42 L482.99 295.87 L483.22 295.34 L483.48 294.83 L483.76 294.33 L484.08 293.86 L484.42 293.40 L484.79 292.97 L485.19 292.53 Z" fill="#2a2a2a"/>
<path d="M622.79 291.21 L623.13 291.68 L623.45 292.15 L623.75 292.64 L624.02 293.17 L624.27 293.71 L624.50 294.28 L624.71 294.87 L624.89 295.48 L625.04 296.11 L625.17 296.75 L625.28 297.40 L625.37 298.07 L625.43 298.74 L625.46 299.42 L625.48 300.10 L625.46 300.78 L625.43 301.46 L625.37 302.13 L625.28 302.80 L625.17 303.45 L625.04 304.09 L624.89 304.72 L624.71 305.33 L624.50 305.92 L624.27 306.49 L624.02 307.03 L623.75 307.56 L623.45 308.05 L623.13 308.52 L622.79 308.99 L623.21 309.41 L623.70 309.04 L624.15 308.59 L624.56 308.10 L624.94 307.56 L625.28 306.99 L625.59 306.39 L625.87 305.76 L626.12 305.10 L626.33 304.43 L626.51 303.73 L626.66 303.02 L626.78 302.30 L626.86 301.57 L626.91 300.84 L626.93 300.10 L626.91 299.36 L626.86 298.63 L626.78 297.90 L626.66 297.18 L626.51 296.47 L626.33 295.77 L626.12 295.10 L625.87 294.44 L625.59 293.81 L625.28 293.21 L624.94 292.64 L624.56 292.10 L624.15 291.61 L623.70 291.16 L623.21 290.79 Z" fill="#2a2a2a"/>
<path d="M397.10 355.17 L396.52 355.56 L395.98 356.03 L395.48 356.55 L395.02 357.11 L394.59 357.71 L394.21 358.35 L393.87 359.01 L393.57 359.70 L393.30 360.42 L393.08 361.15 L392.90 361.90 L392.76 362.66 L392.66 363.44 L392.60 364.22 L392.58 365.00 L392.60 365.78 L392.66 366.56 L392.76 367.34 L392.90 368.10 L393.08 368.85 L393.30 369.58 L393.57 370.30 L393.87 370.99 L394.21 371.65 L394.59 372.29 L395.02 372.89 L395.48 373.45 L395.98 373.97 L396.52 374.44 L397.10 374.83 L397.50 374.37 L397.05 373.87 L396.63 373.37 L396.24 372.85 L395.89 372.30 L395.56 371.72 L395.27 371.12 L395.01 370.50 L394.78 369.85 L394.58 369.19 L394.41 368.52 L394.27 367.83 L394.16 367.13 L394.09 366.43 L394.04 365.71 L394.03 365.00 L394.04 364.29 L394.09 363.57 L394.16 362.87 L394.27 362.17 L394.41 361.48 L394.58 360.81 L394.78 360.15 L395.01 359.50 L395.27 358.88 L395.56 358.28 L395.89 357.70 L396.24 357.15 L396.63 356.63 L397.05 356.13 L397.50 355.63 Z" fill="#2a2a2a"/>
<path d="M421.77 355.60 L422.08 356.09 L422.38 356.58 L422.66 357.10 L422.92 357.65 L423.15 358.22 L423.37 358.82 L423.56 359.45 L423.72 360.10 L423.87 360.76 L423.99 361.44 L424.10 362.14 L424.17 362.84 L424.23 363.56 L424.26 364.28 L424.27 365.00 L424.26 365.72 L424.23 366.44 L424.17 367.16 L424.10 367.86 L423.99 368.56 L423.87 369.24 L423.72 369.90 L423.56 370.55 L423.37 371.18 L423.15 371.78 L422.92 372.35 L422.66 372.90 L422.38 373.42 L422.08 373.91 L421.77 374.40 L422.23 374.80 L422.69 374.40 L423.11 373.92 L423.50 373.40 L423.86 372.83 L424.18 372.23 L424.47 371.60 L424.74 370.93 L424.97 370.25 L425.17 369.54 L425.34 368.81 L425.48 368.07 L425.59 367.31 L425.66 366.55 L425.71 365.77 L425.73 365.00 L425.71 364.23 L425.66 363.45 L425.59 362.69 L425.48 361.93 L425.34 361.19 L425.17 360.46 L424.97 359.75 L424.74 359.07 L424.47 358.40 L424.18 357.77 L423.86 357.17 L423.50 356.60 L423.11 356.08 L422.69 355.60 L422.23 355.20 Z" fill="#2a2a2a"/>
<path d="M474.61 387.07 L474.10 387.38 L473.63 387.77 L473.20 388.19 L472.80 388.66 L472.43 389.16 L472.10 389.69 L471.80 390.24 L471.54 390.82 L471.31 391.42 L471.11 392.03 L470.96 392.66 L470.83 393.30 L470.75 393.94 L470.69 394.59 L470.67 395.25 L470.69 395.91 L470.75 396.56 L470.83 397.20 L470.96 397.84 L471.11 398.47 L471.31 399.08 L471.54 399.68 L471.80 400.26 L472.10 400.81 L472.43 401.34 L472.80 401.84 L473.20 402.31 L473.63 402.73 L474.10 403.12 L474.61 403.43 L474.99 402.97 L474.62 402.55 L474.28 402.13 L473.95 401.69 L473.66 401.24 L473.39 400.76 L473.15 400.27 L472.93 399.75 L472.74 399.23 L472.58 398.68 L472.44 398.13 L472.33 397.57 L472.24 396.99 L472.18 396.42 L472.14 395.83 L472.12 395.25 L472.14 394.67 L472.18 394.08 L472.24 393.51 L472.33 392.93 L472.44 392.37 L472.58 391.82 L472.74 391.27 L472.93 390.75 L473.15 390.23 L473.39 389.74 L473.66 389.26 L473.95 388.81 L474.28 388.37 L474.62 387.95 L474.99 387.53 Z" fill="#2a2a2a"/>
<path d="M690.60 385.73 L691.01 386.20 L691.39 386.67 L691.75 387.16 L692.07 387.68 L692.37 388.22 L692.64 388.78 L692.88 389.36 L693.09 389.96 L693.27 390.58 L693.42 391.21 L693.55 391.85 L693.65 392.51 L693.72 393.17 L693.76 393.83 L693.77 394.50 L693.76 395.17 L693.72 395.83 L693.65 396.49 L693.55 397.15 L693.42 397.79 L693.27 398.42 L693.09 399.04 L692.88 399.64 L692.64 400.22 L692.37 400.78 L692.07 401.32 L691.75 401.84 L691.39 402.33 L691.01 402.80 L690.60 403.27 L691.00 403.73 L691.54 403.37 L692.05 402.93 L692.52 402.44 L692.95 401.91 L693.34 401.35 L693.70 400.75 L694.02 400.13 L694.30 399.48 L694.55 398.81 L694.75 398.12 L694.92 397.41 L695.06 396.69 L695.15 395.97 L695.21 395.24 L695.23 394.50 L695.21 393.76 L695.15 393.03 L695.06 392.31 L694.92 391.59 L694.75 390.88 L694.55 390.19 L694.30 389.52 L694.02 388.87 L693.70 388.25 L693.34 387.65 L692.95 387.09 L692.52 386.56 L692.05 386.07 L691.54 385.63 L691.00 385.27 Z" fill="#2a2a2a"/>
<circle cx="345.00" cy="247.50" r="1.25" fill="#000"/>
<circle cx="434.90" cy="113.55" r="1.25" fill="#000"/>
<circle cx="434.10" cy="137.05" r="1.25" fill="#000"/>
<circle cx="434.90" cy="160.55" r="1.25" fill="#000"/>
<circle cx="434.90" cy="184.05" r="1.25" fill="#000"/>
<circle cx="434.00" cy="207.55" r="1.25" fill="#000"/>
<circle cx="430.30" cy="231.05" r="1.25" fill="#000"/>
<path d="M356.90 113.80 H362.90 M359.90 110.80 V116.80" stroke="#333" stroke-width="1.0"/>
<path d="M356.90 137.30 H362.90 M359.90 134.30 V140.30" stroke="#333" stroke-width="1.0"/>
<path d="M356.90 160.80 H362.90 M359.90 157.80 V163.80" stroke="#333" stroke-width="1.0"/>
<path d="M356.90 184.30 H362.90 M359.90 181.30 V187.30" stroke="#333" stroke-width="1.0"/>
<path d="M356.90 207.80 H362.90 M359.90 204.80 V210.80" stroke="#333" stroke-width="1.0"/>
<path d="M356.90 231.30 H362.90 M359.90 228.30 V234.30" stroke="#333" stroke-width="1.0"/>
<path d="M357.00 280.40 H363.00 M360.00 277.40 V283.40" stroke="#333" stroke-width="1.0"/>
<path d="M357.20 364.80 H363.20 M360.20 361.80 V367.80" stroke="#333" stroke-width="1.0"/>
<path d="M553.70 300.30 H559.70 M556.70 297.30 V303.30" stroke="#333" stroke-width="1.0"/>
<path d="M543.00 395.20 H549.00 M546.00 392.20 V398.20" stroke="#333" stroke-width="1.0"/>
<path d="M615.30 395.20 H621.30 M618.30 392.20 V398.20" stroke="#333" stroke-width="1.0"/>
<path d="M462.80 253.90 H468.40 M462.80 256.50 H468.40" stroke="#404040" stroke-width="0.95"/><path d="M466.80 252.60 L469.70 255.20 L466.80 257.80" stroke="#404040" stroke-width="1.0" fill="none"/>
<path d="M462.80 273.20 H468.40 M462.80 275.80 H468.40" stroke="#404040" stroke-width="0.95"/><path d="M466.80 271.90 L469.70 274.50 L466.80 277.10" stroke="#404040" stroke-width="1.0" fill="none"/>
<path d="M462.50 298.70 H468.10 M462.50 301.30 H468.10" stroke="#404040" stroke-width="0.95"/><path d="M466.50 297.40 L469.40 300.00 L466.50 302.60" stroke="#404040" stroke-width="1.0" fill="none"/>
<path d="M452.90 328.70 H458.50 M452.90 331.30 H458.50" stroke="#404040" stroke-width="0.95"/><path d="M456.90 327.40 L459.80 330.00 L456.90 332.60" stroke="#404040" stroke-width="1.0" fill="none"/>
<path d="M452.90 348.30 H458.50 M452.90 350.90 H458.50" stroke="#404040" stroke-width="0.95"/><path d="M456.90 347.00 L459.80 349.60 L456.90 352.20" stroke="#404040" stroke-width="1.0" fill="none"/>
<path d="M452.90 368.10 H458.50 M452.90 370.70 H458.50" stroke="#404040" stroke-width="0.95"/><path d="M456.90 366.80 L459.80 369.40 L456.90 372.00" stroke="#404040" stroke-width="1.0" fill="none"/>
<path d="M452.90 393.30 H458.50 M452.90 395.90 H458.50" stroke="#404040" stroke-width="0.95"/><path d="M456.90 392.00 L459.80 394.60 L456.90 397.20" stroke="#404040" stroke-width="1.0" fill="none"/>
<rect x="288.1" y="77.0" width="434.4" height="340.6" fill="none" stroke="#29a2d8" stroke-width="1.9"/>
<text x="16.82" y="21.90" font-size="8.7" fill="#000000" stroke="#000000" stroke-width="0.1" textLength="13.27" lengthAdjust="spacingAndGlyphs">MFI</text>
<text x="17.09" y="33.04" font-size="8.7" fill="#000000" stroke="#000000" stroke-width="0.1" textLength="6.49" lengthAdjust="spacingAndGlyphs">CI</text>
<text x="16.82" y="44.18" font-size="8.7" fill="#000000" stroke="#000000" stroke-width="0.1" textLength="36.90" lengthAdjust="spacingAndGlyphs">MFI Good?</text>
<text x="17.09" y="55.32" font-size="8.7" fill="#000000" stroke="#000000" stroke-width="0.1" textLength="30.22" lengthAdjust="spacingAndGlyphs">CI Good?</text>
<text x="17.23" y="66.46" font-size="8.7" fill="#000000" stroke="#000000" stroke-width="0.1" textLength="8.23" lengthAdjust="spacingAndGlyphs">SA</text>
<text x="16.82" y="77.60" font-size="8.7" fill="#000000" stroke="#000000" stroke-width="0.1" textLength="13.54" lengthAdjust="spacingAndGlyphs">M%</text>
<text x="17.36" y="88.74" font-size="8.7" fill="#000000" stroke="#000000" stroke-width="0.1" textLength="6.11" lengthAdjust="spacingAndGlyphs">Xf</text>
<text x="16.96" y="99.88" font-size="8.7" fill="#000000" stroke="#000000" stroke-width="0.1" textLength="10.05" lengthAdjust="spacingAndGlyphs">pH</text>
<text x="17.50" y="111.02" font-size="8.7" fill="#000000" stroke="#000000" stroke-width="0.1" textLength="49.55" lengthAdjust="spacingAndGlyphs">Ambient Temp</text>
<text x="17.50" y="122.16" font-size="8.7" fill="#000000" stroke="#000000" stroke-width="0.1" textLength="29.10" lengthAdjust="spacingAndGlyphs">Viscosity</text>
<text x="17.09" y="133.30" font-size="8.7" fill="#000000" stroke="#000000" stroke-width="0.1" textLength="22.51" lengthAdjust="spacingAndGlyphs">Quarry</text>
<text x="17.23" y="144.44" font-size="8.7" fill="#000000" stroke="#000000" stroke-width="0.1" textLength="14.84" lengthAdjust="spacingAndGlyphs">Shift</text>
<text x="17.50" y="155.58" font-size="8.7" fill="#000000" stroke="#000000" stroke-width="0.1" textLength="33.79" lengthAdjust="spacingAndGlyphs">Validation</text>
<text x="16.82" y="166.72" font-size="8.7" fill="#000000" stroke="#000000" stroke-width="0.1" textLength="65.13" lengthAdjust="spacingAndGlyphs">Hidden Layer (3/1)</text>
<text x="25.02" y="177.86" font-size="8.7" fill="#ffffff" stroke="#ffffff" stroke-width="0.1" textLength="18.13" lengthAdjust="spacingAndGlyphs">H1_1</text>
<text x="25.02" y="189.00" font-size="8.7" fill="#000000" stroke="#000000" stroke-width="0.1" textLength="18.13" lengthAdjust="spacingAndGlyphs">H1_2</text>
<text x="25.02" y="200.14" font-size="8.7" fill="#000000" stroke="#000000" stroke-width="0.1" textLength="18.13" lengthAdjust="spacingAndGlyphs">H1_3</text>
<text x="16.82" y="211.28" font-size="8.7" fill="#000000" stroke="#000000" stroke-width="0.1" textLength="101.83" lengthAdjust="spacingAndGlyphs">Probability( MFI Good?=Bad )</text>
<text x="16.82" y="222.42" font-size="8.7" fill="#000000" stroke="#000000" stroke-width="0.1" textLength="107.63" lengthAdjust="spacingAndGlyphs">Probability( MFI Good?=Good )</text>
<text x="16.82" y="233.56" font-size="8.7" fill="#000000" stroke="#000000" stroke-width="0.1" textLength="78.30" lengthAdjust="spacingAndGlyphs">Most Likely MFI Good?</text>
<text x="13.06" y="9.80" font-size="8.7" fill="#1e1e1e" stroke="#1e1e1e" stroke-width="0.1" textLength="41.72" lengthAdjust="spacingAndGlyphs">19 Columns</text>
<text x="290.14" y="250.75" font-size="10.0" fill="#1a1a1a" stroke="#1a1a1a" stroke-width="0.16" textLength="23.07" lengthAdjust="spacingAndGlyphs">TanH</text>
<text x="325.49" y="250.75" font-size="10.0" fill="#1a1a1a" stroke="#1a1a1a" stroke-width="0.16" textLength="13.22" lengthAdjust="spacingAndGlyphs">0,5</text>
<text x="358.79" y="95.75" font-size="10.0" fill="#1a1a1a" stroke="#1a1a1a" stroke-width="0.16" textLength="53.62" lengthAdjust="spacingAndGlyphs">-13,1130875</text>
<text x="368.29" y="116.85" font-size="10.0" fill="#1a1a1a" stroke="#1a1a1a" stroke-width="0.16" textLength="60.22" lengthAdjust="spacingAndGlyphs">0,1649725862</text>
<text x="439.74" y="116.85" font-size="10.0" font-style="italic" fill="#1a1a1a" stroke="#1a1a1a" stroke-width="0.16" textLength="11.78" lengthAdjust="spacingAndGlyphs">SA</text>
<text x="368.89" y="140.35" font-size="10.0" fill="#1a1a1a" stroke="#1a1a1a" stroke-width="0.16" textLength="58.82" lengthAdjust="spacingAndGlyphs">-0,426634987</text>
<text x="438.94" y="140.35" font-size="10.0" font-style="italic" fill="#1a1a1a" stroke="#1a1a1a" stroke-width="0.16" textLength="15.85" lengthAdjust="spacingAndGlyphs">M%</text>
<text x="368.29" y="163.85" font-size="10.0" fill="#1a1a1a" stroke="#1a1a1a" stroke-width="0.16" textLength="60.06" lengthAdjust="spacingAndGlyphs">0,2362462144</text>
<text x="440.21" y="163.85" font-size="10.0" font-style="italic" fill="#1a1a1a" stroke="#1a1a1a" stroke-width="0.16" textLength="7.22" lengthAdjust="spacingAndGlyphs">Xf</text>
<text x="368.29" y="187.35" font-size="10.0" fill="#1a1a1a" stroke="#1a1a1a" stroke-width="0.16" textLength="60.22" lengthAdjust="spacingAndGlyphs">0,2558811797</text>
<text x="440.21" y="187.35" font-size="10.0" font-style="italic" fill="#1a1a1a" stroke="#1a1a1a" stroke-width="0.16" textLength="11.67" lengthAdjust="spacingAndGlyphs">pH</text>
<text x="368.89" y="210.85" font-size="10.0" fill="#1a1a1a" stroke="#1a1a1a" stroke-width="0.16" textLength="58.72" lengthAdjust="spacingAndGlyphs">-0,051482799</text>
<text x="439.62" y="210.85" font-size="10.0" font-style="italic" fill="#1a1a1a" stroke="#1a1a1a" stroke-width="0.16" textLength="60.62" lengthAdjust="spacingAndGlyphs">Ambient Temp</text>
<text x="368.29" y="234.35" font-size="10.0" fill="#1a1a1a" stroke="#1a1a1a" stroke-width="0.16" textLength="55.62" lengthAdjust="spacingAndGlyphs">0,013265233</text>
<text x="434.52" y="234.35" font-size="10.0" font-style="italic" fill="#1a1a1a" stroke="#1a1a1a" stroke-width="0.16" textLength="35.26" lengthAdjust="spacingAndGlyphs">Viscosity</text>
<text x="365.72" y="284.35" font-size="10.0" fill="#1a1a1a" stroke="#1a1a1a" stroke-width="0.16" textLength="28.54" lengthAdjust="spacingAndGlyphs">Match</text>
<text x="398.83" y="284.35" font-size="10.0" font-style="italic" fill="#1a1a1a" stroke="#1a1a1a" stroke-width="0.16" textLength="28.24" lengthAdjust="spacingAndGlyphs">Quarry</text>
<text x="444.39" y="258.95" font-size="10.0" fill="#1a1a1a" stroke="#1a1a1a" stroke-width="0.16" textLength="14.14" lengthAdjust="spacingAndGlyphs"><tspan fill="#6a6a6a" stroke="none">&quot;</tspan>A<tspan fill="#6a6a6a" stroke="none">&quot;</tspan></text>
<text x="473.49" y="258.95" font-size="10.0" fill="#1a1a1a" stroke="#1a1a1a" stroke-width="0.16" textLength="59.72" lengthAdjust="spacingAndGlyphs">0,1231867567</text>
<text x="444.39" y="278.25" font-size="10.0" fill="#1a1a1a" stroke="#1a1a1a" stroke-width="0.16" textLength="14.14" lengthAdjust="spacingAndGlyphs"><tspan fill="#6a6a6a" stroke="none">&quot;</tspan>B<tspan fill="#6a6a6a" stroke="none">&quot;</tspan></text>
<text x="473.49" y="278.25" font-size="10.0" fill="#1a1a1a" stroke="#1a1a1a" stroke-width="0.16" textLength="55.22" lengthAdjust="spacingAndGlyphs">0,092588068</text>
<text x="444.19" y="303.75" font-size="10.0" fill="#1a1a1a" stroke="#1a1a1a" stroke-width="0.16" textLength="14.24" lengthAdjust="spacingAndGlyphs"><tspan fill="#6a6a6a" stroke="none">&quot;</tspan>C<tspan fill="#6a6a6a" stroke="none">&quot;</tspan></text>
<text x="474.49" y="303.55" font-size="10.0" fill="#1a1a1a" stroke="#1a1a1a" stroke-width="0.16">-</text>
<text x="489.59" y="303.25" font-size="10.0" fill="#1a1a1a" stroke="#1a1a1a" stroke-width="0.16" textLength="59.72" lengthAdjust="spacingAndGlyphs">0,1231867567</text>
<text x="562.79" y="303.25" font-size="10.0" fill="#1a1a1a" stroke="#1a1a1a" stroke-width="0.16" textLength="55.12" lengthAdjust="spacingAndGlyphs">0,092588068</text>
<text x="365.72" y="368.85" font-size="10.0" fill="#1a1a1a" stroke="#1a1a1a" stroke-width="0.16" textLength="28.34" lengthAdjust="spacingAndGlyphs">Match</text>
<text x="398.74" y="368.85" font-size="10.0" font-style="italic" fill="#1a1a1a" stroke="#1a1a1a" stroke-width="0.16" textLength="17.91" lengthAdjust="spacingAndGlyphs">Shift</text>
<text x="433.69" y="333.65" font-size="10.0" fill="#1a1a1a" stroke="#1a1a1a" stroke-width="0.16" textLength="15.14" lengthAdjust="spacingAndGlyphs"><tspan fill="#6a6a6a" stroke="none">&quot;</tspan>A<tspan fill="#6a6a6a" stroke="none">&quot;</tspan></text>
<text x="464.19" y="333.65" font-size="10.0" fill="#1a1a1a" stroke="#1a1a1a" stroke-width="0.16" textLength="57.72" lengthAdjust="spacingAndGlyphs">-0,086444997</text>
<text x="433.69" y="353.35" font-size="10.0" fill="#1a1a1a" stroke="#1a1a1a" stroke-width="0.16" textLength="15.14" lengthAdjust="spacingAndGlyphs"><tspan fill="#6a6a6a" stroke="none">&quot;</tspan>B<tspan fill="#6a6a6a" stroke="none">&quot;</tspan></text>
<text x="464.19" y="353.35" font-size="10.0" fill="#1a1a1a" stroke="#1a1a1a" stroke-width="0.16" textLength="57.72" lengthAdjust="spacingAndGlyphs">-0,005899282</text>
<text x="433.69" y="373.05" font-size="10.0" fill="#1a1a1a" stroke="#1a1a1a" stroke-width="0.16" textLength="15.14" lengthAdjust="spacingAndGlyphs"><tspan fill="#6a6a6a" stroke="none">&quot;</tspan>C<tspan fill="#6a6a6a" stroke="none">&quot;</tspan></text>
<text x="463.59" y="373.05" font-size="10.0" fill="#1a1a1a" stroke="#1a1a1a" stroke-width="0.16" textLength="59.82" lengthAdjust="spacingAndGlyphs">0,0052082772</text>
<text x="433.69" y="398.35" font-size="10.0" fill="#1a1a1a" stroke="#1a1a1a" stroke-width="0.16" textLength="15.34" lengthAdjust="spacingAndGlyphs"><tspan fill="#6a6a6a" stroke="none">&quot;</tspan>D<tspan fill="#6a6a6a" stroke="none">&quot;</tspan></text>
<text x="464.69" y="398.15" font-size="10.0" fill="#1a1a1a" stroke="#1a1a1a" stroke-width="0.16">-</text>
<text x="480.79" y="398.05" font-size="10.0" fill="#1a1a1a" stroke="#1a1a1a" stroke-width="0.16" textLength="58.12" lengthAdjust="spacingAndGlyphs">-0,086444997</text>
<text x="552.59" y="398.05" font-size="10.0" fill="#1a1a1a" stroke="#1a1a1a" stroke-width="0.16" textLength="58.62" lengthAdjust="spacingAndGlyphs">-0,005899282</text>
<text x="624.39" y="398.05" font-size="10.0" fill="#1a1a1a" stroke="#1a1a1a" stroke-width="0.16" textLength="60.32" lengthAdjust="spacingAndGlyphs">0,0052082772</text>
</svg>
</body></html>
